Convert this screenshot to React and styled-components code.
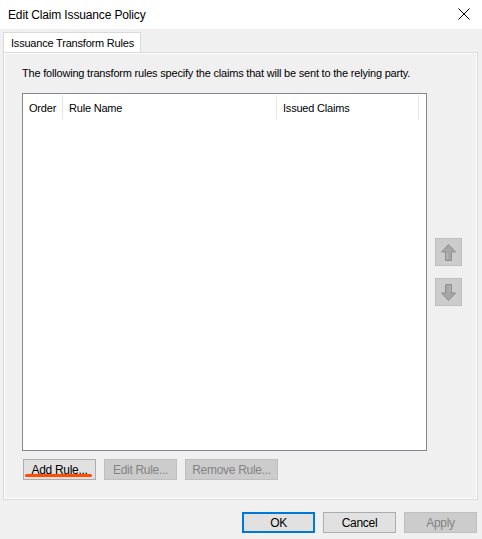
import React from 'react';
import styled, { createGlobalStyle } from 'styled-components';

const Global = createGlobalStyle`
  html, body { margin: 0; padding: 0; background: #f0f0f0; }
  body { font-family: "Liberation Sans", Arial, sans-serif; font-size: 11px; letter-spacing: -0.2px; color: #000; }
`;

const Dialog = styled.div`
  width: 482px;
  height: 539px;
  display: flex;
  flex-direction: column;
  background: #f0f0f0;
  overflow: hidden;
`;

const TitleBar = styled.div`
  height: 29px;
  flex: none;
  background: #fff;
  display: flex;
  align-items: center;
  justify-content: space-between;
  padding: 0 8px 0 8px;
  font-size: 12px;
  letter-spacing: -0.15px;
`;

const Close = styled.div`
  width: 14px;
  height: 14px;
  display: flex;
  margin-right: 2px;
`;

const TabStrip = styled.div`
  display: flex;
  padding: 3px 0 0 3px;
  height: 20px;
  flex: none;
`;

const Tab = styled.div`
  height: 20px;
  width: 138px;
  box-sizing: border-box;
  padding: 0 0 0 7px;
  display: flex;
  align-items: center;
  background: #fff;
  border: 1px solid #d9d9d9;
  border-bottom: none;
  position: relative;
  z-index: 1;
  margin-bottom: -1px;
`;

const Panel = styled.div`
  margin: 0 4px 0 3px;
  height: 448px;
  box-sizing: border-box;
  border: 1px solid #d9d9d9;
  box-shadow: inset 0 0 0 1px #fff;
  padding: 12px 0 0 18px;
  display: flex;
  flex-direction: column;
`;

const Description = styled.div`
  height: 16px;
  line-height: 16px;
`;

const ListArea = styled.div`
  display: flex;
  gap: 8px;
  margin-top: 12px;
`;

const ListBox = styled.div`
  width: 405px;
  height: 358px;
  box-sizing: border-box;
  border: 1px solid #828790;
  background: #fff;
`;

const Header = styled.div`
  display: flex;
  height: 24px;
  padding-top: 1px;
`;

const Col = styled.div`
  width: ${p => p.w}px;
  box-sizing: border-box;
  padding-left: 6px;
  padding-top: 2px;
  display: flex;
  align-items: center;
  border-right: 1px solid #e5e5e5;
`;

const ArrowColumn = styled.div`
  display: flex;
  flex-direction: column;
  gap: 12px;
  padding-top: 145px;
`;

const ArrowButton = styled.div`
  width: 27px;
  height: 28px;
  box-sizing: border-box;
  background: #cccccc;
  border: 1px solid #bfbfbf;
  display: flex;
  align-items: center;
  justify-content: center;
`;

const Row = styled.div`
  display: flex;
  gap: ${p => p.gap || 8}px;
`;

const RuleRow = styled(Row)`
  margin-top: 8px;
  padding-left: 1px;
`;

const Button = styled.div`
  width: ${p => p.w}px;
  height: 21px;
  box-sizing: border-box;
  display: flex;
  align-items: center;
  justify-content: center;
  position: relative;
  background: ${p => (p.disabled ? '#cccccc' : '#e1e1e1')};
  border: ${p => (p.primary ? '2px solid #0078d7' : p.disabled ? '1px solid #bfbfbf' : '1px solid #adadad')};
  color: ${p => (p.disabled ? '#838383' : '#000')};
  font-size: 12px;
  letter-spacing: -0.3px;
`;

const Mark = styled.span`
  position: absolute;
  left: 1px;
  bottom: 2px;
  width: 67px;
  height: 3px;
  border-radius: 2px;
  background: #ff4e00;
`;

const Footer = styled(Row)`
  justify-content: flex-end;
  padding: 12px 5px 0 0;
`;

const Arrow = ({ down }) => (
  <svg width="17" height="19" viewBox="0 0 17 19" style={down ? { transform: 'rotate(180deg)' } : null}>
    <path d="M8.5 1.5 L15.5 9 L11.5 9 L11.5 17.5 L5.5 17.5 L5.5 9 L1.5 9 Z" fill="#a6a6a6" stroke="#8e8e8e" strokeWidth="1" />
    <path d="M7 10 L7 16.5" stroke="#bdbdbd" strokeWidth="1" />
  </svg>
);

export default function App() {
  return (
    <Dialog>
      <Global />
      <TitleBar>
        <span>Edit Claim Issuance Policy</span>
        <Close>
          <svg width="12" height="12" viewBox="0 0 12 12">
            <path d="M0.5 0.5 L11.5 11.5 M11.5 0.5 L0.5 11.5" stroke="#000" strokeWidth="1" />
          </svg>
        </Close>
      </TitleBar>
      <TabStrip>
        <Tab>Issuance Transform Rules</Tab>
      </TabStrip>
      <Panel>
        <Description>The following transform rules specify the claims that will be sent to the relying party.</Description>
        <ListArea>
          <ListBox>
            <Header>
              <Col w={40}>Order</Col>
              <Col w={214}>Rule Name</Col>
              <Col w={142}>Issued Claims</Col>
            </Header>
          </ListBox>
          <ArrowColumn>
            <ArrowButton><Arrow /></ArrowButton>
            <ArrowButton><Arrow down /></ArrowButton>
          </ArrowColumn>
        </ListArea>
        <RuleRow>
          <Button w={73}>Add Rule...<Mark /></Button>
          <Button w={73} disabled>Edit Rule...</Button>
          <Button w={93} disabled>Remove Rule...</Button>
        </RuleRow>
      </Panel>
      <Footer>
        <Button w={73} primary>OK</Button>
        <Button w={73}>Cancel</Button>
        <Button w={73} disabled>Apply</Button>
      </Footer>
    </Dialog>
  );
}
